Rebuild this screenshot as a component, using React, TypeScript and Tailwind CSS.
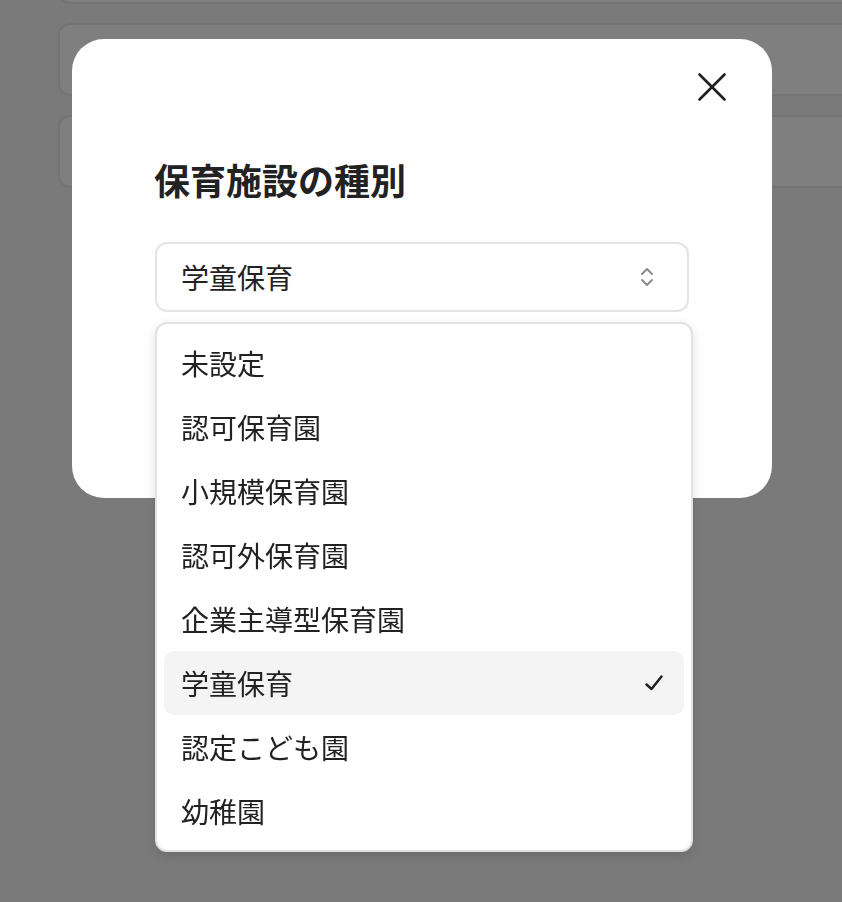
import React from "react";

const items = [
  "未設定",
  "認可保育園",
  "小規模保育園",
  "認可外保育園",
  "企業主導型保育園",
  "学童保育",
  "認定こども園",
  "幼稚園",
];

export default function App() {
  const selected = "学童保育";
  return (
    <div
      className="relative h-[902px] w-full overflow-hidden bg-[#f4f5f4]"
      style={{ fontFamily: '"Noto Sans CJK JP", "Noto Sans", sans-serif' }}
    >
      <div className="flex flex-col gap-[19px] pl-[58px]">
        <div className="-mt-[69px] h-[73px] w-[820px] rounded-[12px] border-2 border-[#e8e9e8] bg-white" />
        <div className="h-[73px] w-[820px] rounded-[12px] border-2 border-[#e8e9e8] bg-white" />
        <div className="h-[73px] w-[820px] rounded-[12px] border-2 border-[#e8e9e8] bg-white" />
      </div>

      <div className="fixed inset-0 bg-black/50" />

      <div className="fixed left-[72px] top-[39px] h-[459px] w-[700px] rounded-[32px] bg-white">
        <button className="absolute left-[625px] top-[33px] flex h-[30px] w-[30px] items-center justify-center">
          <svg width="30" height="30" viewBox="0 0 30 30" fill="none" stroke="#1f1f1f" strokeWidth="2.6" strokeLinecap="round">
            <path d="M2.5 2.5 L27.5 27.5" />
            <path d="M27.5 2.5 L2.5 27.5" />
          </svg>
        </button>

        <div className="px-[83px] pt-[113px]">
          <h2 className="-ml-[1px] text-[36px] font-bold leading-[54px] text-[#222222]">保育施設の種別</h2>
          <div className="mt-[36px] flex h-[70px] w-[534px] items-center justify-between rounded-[12px] border-2 border-[#e4e4e4] pl-[24px] pr-[28px]">
            <span className="text-[28px] leading-none text-[#222222]">{selected}</span>
            <svg width="24" height="24" viewBox="0 0 24 24" fill="none" stroke="#8c8c8c" strokeWidth="2" strokeLinecap="round" strokeLinejoin="round">
              <path d="m7 15 5 5 5-5" />
              <path d="m7 9 5-5 5 5" />
            </svg>
          </div>
        </div>

        <div className="absolute left-[83px] top-[283px] w-[538px] rounded-[12px] border-2 border-[#e2e2e2] bg-white p-[7px] shadow-[0_4px_12px_rgba(0,0,0,0.12)]">
          {items.map((it) => {
            const isSel = it === selected;
            return (
              <div
                key={it}
                className={
                  isSel
                    ? "flex h-[64px] items-center justify-between rounded-[10px] bg-[#f4f4f4] pl-[17px] pr-[20px]"
                    : "flex h-[64px] items-center justify-between rounded-[10px] pl-[17px] pr-[20px]"
                }
              >
                <span className="text-[28px] leading-none text-[#222222]">{it}</span>
                {isSel && (
                  <svg width="20" height="20" viewBox="0 0 20 20" fill="none" stroke="#1f1f1f" strokeWidth="2.4" strokeLinecap="round" strokeLinejoin="round">
                    <path d="M2.5 11.5 L7.5 16 L17.5 3.5" />
                  </svg>
                )}
              </div>
            );
          })}
        </div>
      </div>
    </div>
  );
}
